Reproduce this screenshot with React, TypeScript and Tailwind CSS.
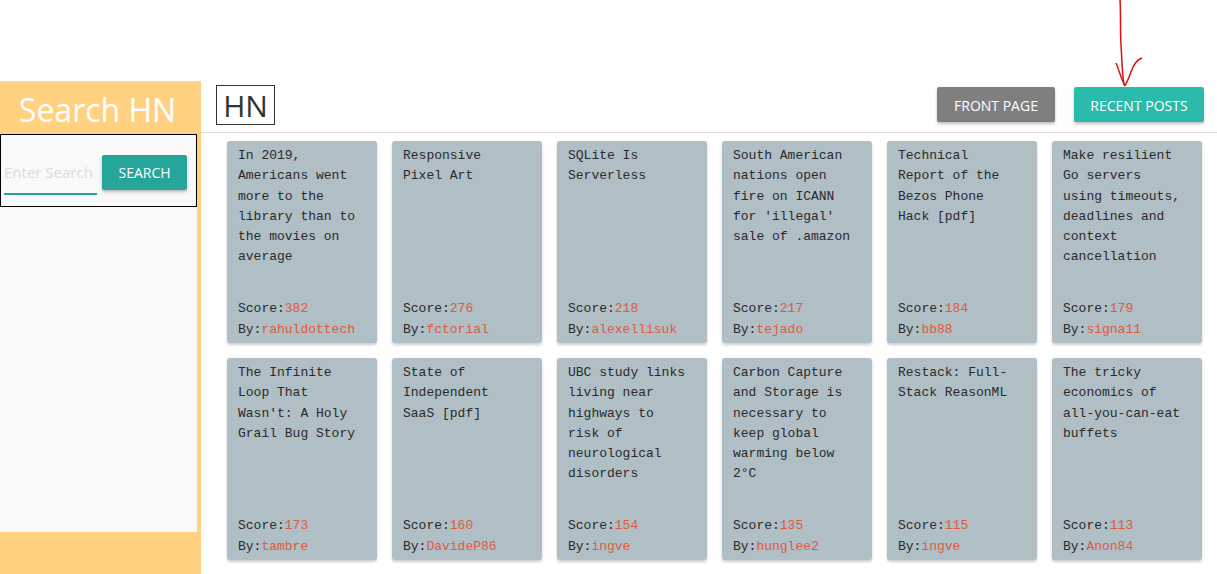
import React from "react";

const posts = [
  { t: "In 2019, Americans went more to the library than to the movies on average", s: 382, by: "rahuldottech" },
  { t: "Responsive Pixel Art", s: 276, by: "fctorial" },
  { t: "SQLite Is Serverless", s: 218, by: "alexellisuk" },
  { t: "South American nations open fire on ICANN for 'illegal' sale of .amazon", s: 217, by: "tejado" },
  { t: "Technical Report of the Bezos Phone Hack [pdf]", s: 184, by: "bb88" },
  { t: "Make resilient Go servers using timeouts, deadlines and context cancellation", s: 179, by: "signa11" },
  { t: "The Infinite Loop That Wasn't: A Holy Grail Bug Story", s: 173, by: "tambre" },
  { t: "State of Independent SaaS [pdf]", s: 160, by: "DavideP86" },
  { t: "UBC study links living near highways to risk of neurological disorders", s: 154, by: "ingve" },
  { t: "Carbon Capture and Storage is necessary to keep global warming below 2°C", s: 135, by: "hunglee2" },
  { t: "Restack: Full-Stack ReasonML", s: 115, by: "ingve" },
  { t: "The tricky economics of all-you-can-eat buffets", s: 113, by: "Anon84" },
];

export default function App() {
  return (
    <div className="relative h-[574px] w-[1217px] overflow-hidden bg-white" style={{ fontFamily: "'Open Sans', sans-serif" }}>
      <svg className="absolute left-[1100px] top-0" width="60" height="90" viewBox="1100 0 60 90" fill="none">
        <path d="M1120 0 C1121 15 1120 30 1121 45 C1122 60 1122 72 1124 85" stroke="#e01010" strokeWidth="1.5" />
        <path d="M1116 63 C1119 70 1121 78 1125 86" stroke="#e01010" strokeWidth="1.5" />
        <path d="M1142 58 C1136 60 1133 66 1131 72 C1129 78 1127 82 1125 86" stroke="#e01010" strokeWidth="1.5" />
      </svg>
      <div className="h-[81px]" />
      <div className="flex h-[493px]">
        <aside className="flex w-[201px] shrink-0 flex-col bg-[#ffd180]">
          <div className="flex h-[53px] items-center justify-center pr-[6px] pt-[4px] text-[32px] leading-none text-white">Search HN</div>
          <div className="flex h-[398px] w-[197px] flex-col bg-[#f9f9f9]">
            <div className="flex h-[73px] items-start border border-black pl-[3px]">
              <div className="mt-[21px] flex h-[39px] w-[93px] items-start border-b-2 border-[#26a69a] pt-[6px] text-[15px] leading-[20px] text-[#dcdcdc]">
                Enter Search
              </div>
              <button className="ml-[5px] mt-[20px] h-[35px] w-[85px] rounded-[2px] bg-[#26a69a] text-[14px] text-white shadow-[0_2px_3px_rgba(0,0,0,0.25)]">
                SEARCH
              </button>
            </div>
          </div>
        </aside>
        <main className="flex-1">
          <div className="flex h-[52px] items-start border-b border-[#e0e0e0]">
            <div className="ml-[15px] mt-[4px] flex h-[40px] w-[59px] items-center justify-center border border-[#333] text-[30px] text-[#333]">
              HN
            </div>
            <div className="ml-auto mr-[13px] mt-[6px] flex gap-[19px]">
              <button className="h-[35px] w-[118px] rounded-[2px] bg-[#7f7f7f] pt-[1px] text-[14px] text-white shadow-[0_2px_3px_rgba(0,0,0,0.25)]">
                FRONT PAGE
              </button>
              <button className="h-[35px] w-[130px] rounded-[2px] bg-[#2bbbad] pt-[1px] text-[14px] text-white shadow-[0_2px_3px_rgba(0,0,0,0.25)]">
                RECENT POSTS
              </button>
            </div>
          </div>
          <div className="grid grid-cols-[repeat(6,150px)] gap-[15px] pl-[26px] pt-[8px]">
            {posts.map((p) => (
              <div
                key={p.t}
                className="flex h-[202px] flex-col justify-between rounded-[3px] bg-[#b0bec5] pb-[3px] pl-[11px] pr-[18px] pt-[5px] text-[13px] leading-[20.3px] text-[#2a2a2a] shadow-[0_2px_3px_rgba(0,0,0,0.2)]"
                style={{ fontFamily: "'Liberation Mono', 'Courier New', monospace" }}
              >
                <div>{p.t}</div>
                <div className="whitespace-nowrap">
                  <div>
                    Score:<span className="text-[#df5a3e]">{p.s}</span>
                  </div>
                  <div>
                    By:<span className="text-[#df5a3e]">{p.by}</span>
                  </div>
                </div>
              </div>
            ))}
          </div>
        </main>
      </div>
    </div>
  );
}
